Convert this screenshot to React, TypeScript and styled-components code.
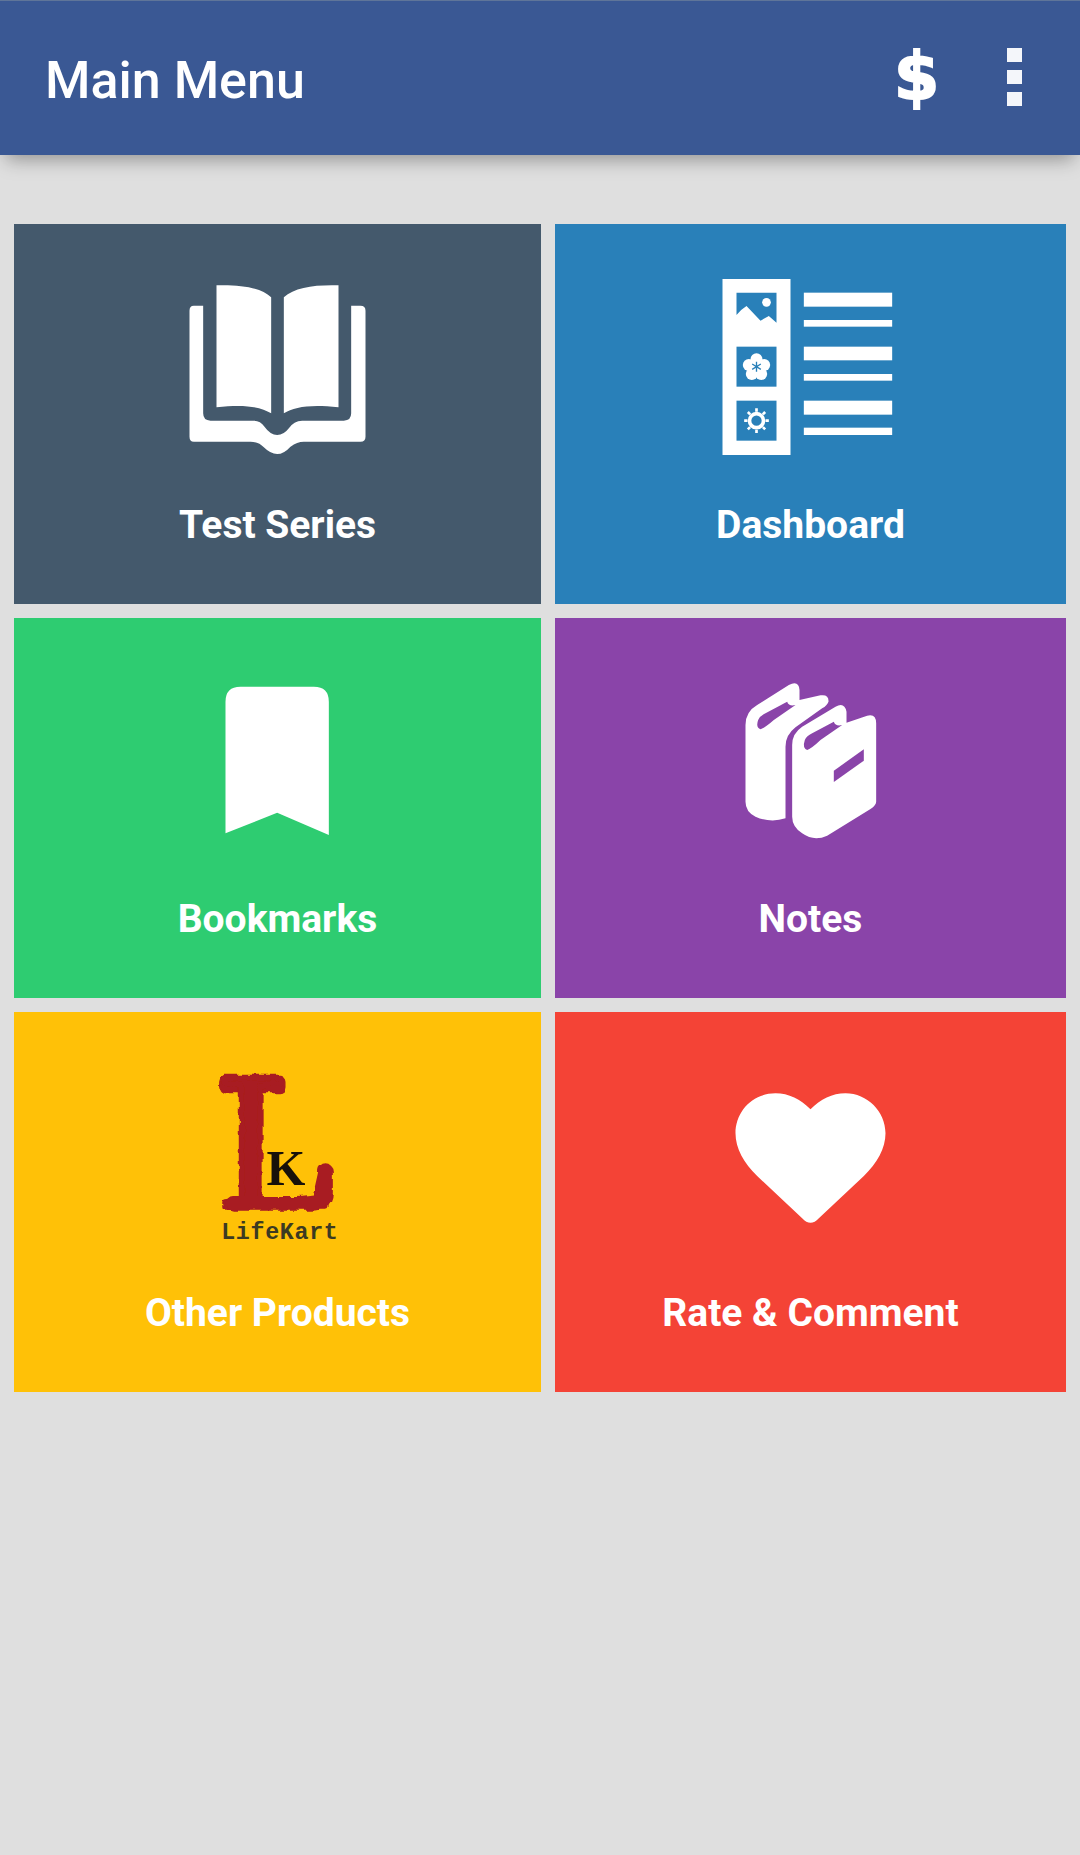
import React from 'react'
import styled, { createGlobalStyle } from 'styled-components'

const GlobalStyle = createGlobalStyle`
  html, body {
    margin: 0;
    padding: 0;
    background: #dfdfdf;
    font-family: Roboto, "Liberation Sans", sans-serif;
  }
`

const Page = styled.div`
  width: 1080px;
  height: 1855px;
  overflow: hidden;
  background: #dfdfdf;
`

const Header = styled.header`
  height: 154px;
  display: flex;
  align-items: center;
  padding-left: 45px;
  background: #3a5894;
  border-top: 1px solid #5f7599;
  box-shadow: 0 10px 18px -6px rgba(0, 0, 0, 0.36);
`

const Title = styled.h1`
  flex: 1;
  margin: 4px 0 0;
  font-size: 52px;
  font-weight: 500;
  color: #fff;
`

const Dollar = styled.span`
  width: 41px;
  margin-right: 72px;
  margin-bottom: 2px;
  font-family: "DejaVu Sans", sans-serif;
  font-size: 65px;
  font-weight: 700;
  line-height: 60px;
  text-align: center;
  color: #fff;
  -webkit-text-stroke: 2px #fff;
  stroke-linejoin: round;
`

const OverflowMenu = styled.div`
  display: flex;
  flex-direction: column;
  gap: 8px;
  margin-right: 58px;
  margin-bottom: 2px;

  i {
    display: block;
    width: 15px;
    height: 14px;
    background: #f4f6fa;
  }
`

const Grid = styled.main`
  display: grid;
  grid-template-columns: 527px 511px;
  grid-auto-rows: 380px;
  gap: 14px;
  padding: 69px 14px 0;
`

const Card = styled.a<{ $color: string }>`
  display: flex;
  flex-direction: column;
  align-items: center;
  padding-top: 25px;
  background: ${p => p.$color};
  color: #fff;
`

const Icon = styled.svg`
  display: block;
  width: 240px;
  height: 240px;
  overflow: visible;
`

const Label = styled.span`
  margin-top: 13px;
  font-size: 39px;
  line-height: 46px;
  font-weight: 700;
`

const BookIcon = () => (
  <Icon viewBox="-7.5 -33 720 720">
    <path fill="#fff" d="M168 76C240 74 300 82 332 112V460C300 440 250 432 168 442Z" />
    <path fill="#fff" d="M534 76C462 74 402 82 370 112V460C402 440 452 432 534 442Z" />
    <path fill="#fff" d="M100 137H128V460Q128 482 150 482H280Q300 482 312 500Q330 525 350 525Q370 525 385 505Q400 482 425 482H550Q572 482 572 460V137H600Q615 137 615 152V530Q615 545 600 545H430Q410 545 390 560Q370 582 350 582Q330 582 310 562Q295 545 270 545H100Q87 545 87 530V152Q87 137 100 137Z" />
  </Icon>
)

const DashboardIcon = () => (
  <Icon viewBox="-28.5 -33 720 720">
    <rect x="66" y="57" width="204" height="528" fill="#fff" />
    <path fill="#2980b9" d="M108 98H228V188L205 168L180 182L138 138L122 150L108 165Z" />
    <circle cx="198" cy="127" r="13" fill="#fff" />
    <rect x="108" y="260" width="120" height="120" fill="#2980b9" />
    <g fill="#fff">
      <circle cx="168" cy="298" r="18" />
      <circle cx="191" cy="315" r="18" />
      <circle cx="182" cy="342" r="18" />
      <circle cx="154" cy="342" r="18" />
      <circle cx="145" cy="315" r="18" />
      <circle cx="168" cy="322" r="22" />
    </g>
    <path stroke="#2980b9" strokeWidth="4" d="M168 305V335M155 312L181 328M181 312L155 328" />
    <rect x="108" y="422" width="120" height="120" fill="#2980b9" />
    <circle cx="168" cy="482" r="21" fill="none" stroke="#fff" strokeWidth="11" />
    <path stroke="#fff" strokeWidth="8" d="M168 445V519M131 482H205M142 456L194 508M194 456L142 508" strokeDasharray="10 54" />
    <g fill="#fff">
      <rect x="310" y="98" width="265" height="42" />
      <rect x="310" y="180" width="265" height="20" />
      <rect x="310" y="260" width="265" height="41" />
      <rect x="310" y="342" width="265" height="20" />
      <rect x="310" y="422" width="265" height="42" />
      <rect x="310" y="503" width="265" height="22" />
    </g>
  </Icon>
)

const BookmarkIcon = () => (
  <Icon viewBox="-157.5 -81 720 720">
    <path fill="#fff" d="M45 95Q45 50 90 50H310Q355 50 355 95V495L200 428L45 490Z" />
  </Icon>
)

const NotesIcon = () => (
  <Icon viewBox="-88.5 -81 720 720">
    <path fill="#fff" d="M75 165Q75 125 110 105L205 45Q235 30 237 60V90L300 76Q325 72 324 95Q320 106 305 115L225 172Q195 195 195 230V445Q150 460 105 440Q75 425 75 395Z" />
    <path fill="#8a44a9" d="M200 95Q205 110 225 105L160 150Q135 172 120 178Q105 172 113 150Q118 138 135 130Z" />
    <path fill="#fff" d="M215 225Q215 190 245 170L345 110Q372 95 378 125V158L440 137Q467 130 467 160V395Q467 405 450 417L320 497Q280 515 245 490Q215 470 215 440Z" />
    <path fill="#8a44a9" d="M340 155Q345 170 365 165L300 210Q275 234 260 240Q245 234 253 210Q258 198 275 190Z" />
    <path fill="#8a44a9" d="M340 302L430 238V272L340 336Z" />
  </Icon>
)

const LifeKartLogo = () => (
  <Icon viewBox="-127.5 -69 720 720">
    <defs>
      <filter id="rough" x="-10%" y="-10%" width="120%" height="120%">
        <feTurbulence type="fractalNoise" baseFrequency="0.035" numOctaves="2" seed="4" />
        <feDisplacementMap in="SourceGraphic" scale="16" />
      </filter>
    </defs>
    <g fill="#a81c20" stroke="#a81c20" filter="url(#rough)">
      <rect x="58" y="50" width="195" height="48" rx="16" strokeWidth="4" />
      <text x="56" y="440" fontFamily="Liberation Serif" fontSize="590" strokeWidth="16" strokeLinejoin="round">L</text>
      <path fill="none" strokeWidth="44" strokeLinecap="round" strokeLinejoin="round" d="M98 430H330Q375 430 375 398V332" />
    </g>
    <text x="198" y="375" fontFamily="Liberation Serif" fontWeight="700" fontSize="150" fill="#17110a">K</text>
    <text x="62" y="537" fontFamily="Liberation Mono" fontWeight="700" fontSize="70" letterSpacing="2" fill="#3c3a22">LifeKart</text>
  </Icon>
)

const HeartIcon = () => (
  <Icon viewBox="-88.5 -99 720 720">
    <path fill="#fff" d="M270 118C240 88 205 70 165 70C95 70 45 125 45 190C45 235 70 280 110 318L245 445Q270 472 295 445L430 318C470 280 495 235 495 190C495 125 440 70 375 70C335 70 300 88 270 118Z" />
  </Icon>
)

const items = [
  { label: 'Test Series', color: '#44596c', icon: <BookIcon /> },
  { label: 'Dashboard', color: '#2980b9', icon: <DashboardIcon /> },
  { label: 'Bookmarks', color: '#2ecc71', icon: <BookmarkIcon /> },
  { label: 'Notes', color: '#8a44a9', icon: <NotesIcon /> },
  { label: 'Other Products', color: '#ffc107', icon: <LifeKartLogo /> },
  { label: 'Rate & Comment', color: '#f44336', icon: <HeartIcon /> },
]

export default function App() {
  return (
    <Page>
      <GlobalStyle />
      <Header>
        <Title>Main Menu</Title>
        <Dollar>$</Dollar>
        <OverflowMenu><i /><i /><i /></OverflowMenu>
      </Header>
      <Grid>
        {items.map(item => (
          <Card key={item.label} $color={item.color}>
            {item.icon}
            <Label>{item.label}</Label>
          </Card>
        ))}
      </Grid>
    </Page>
  )
}
